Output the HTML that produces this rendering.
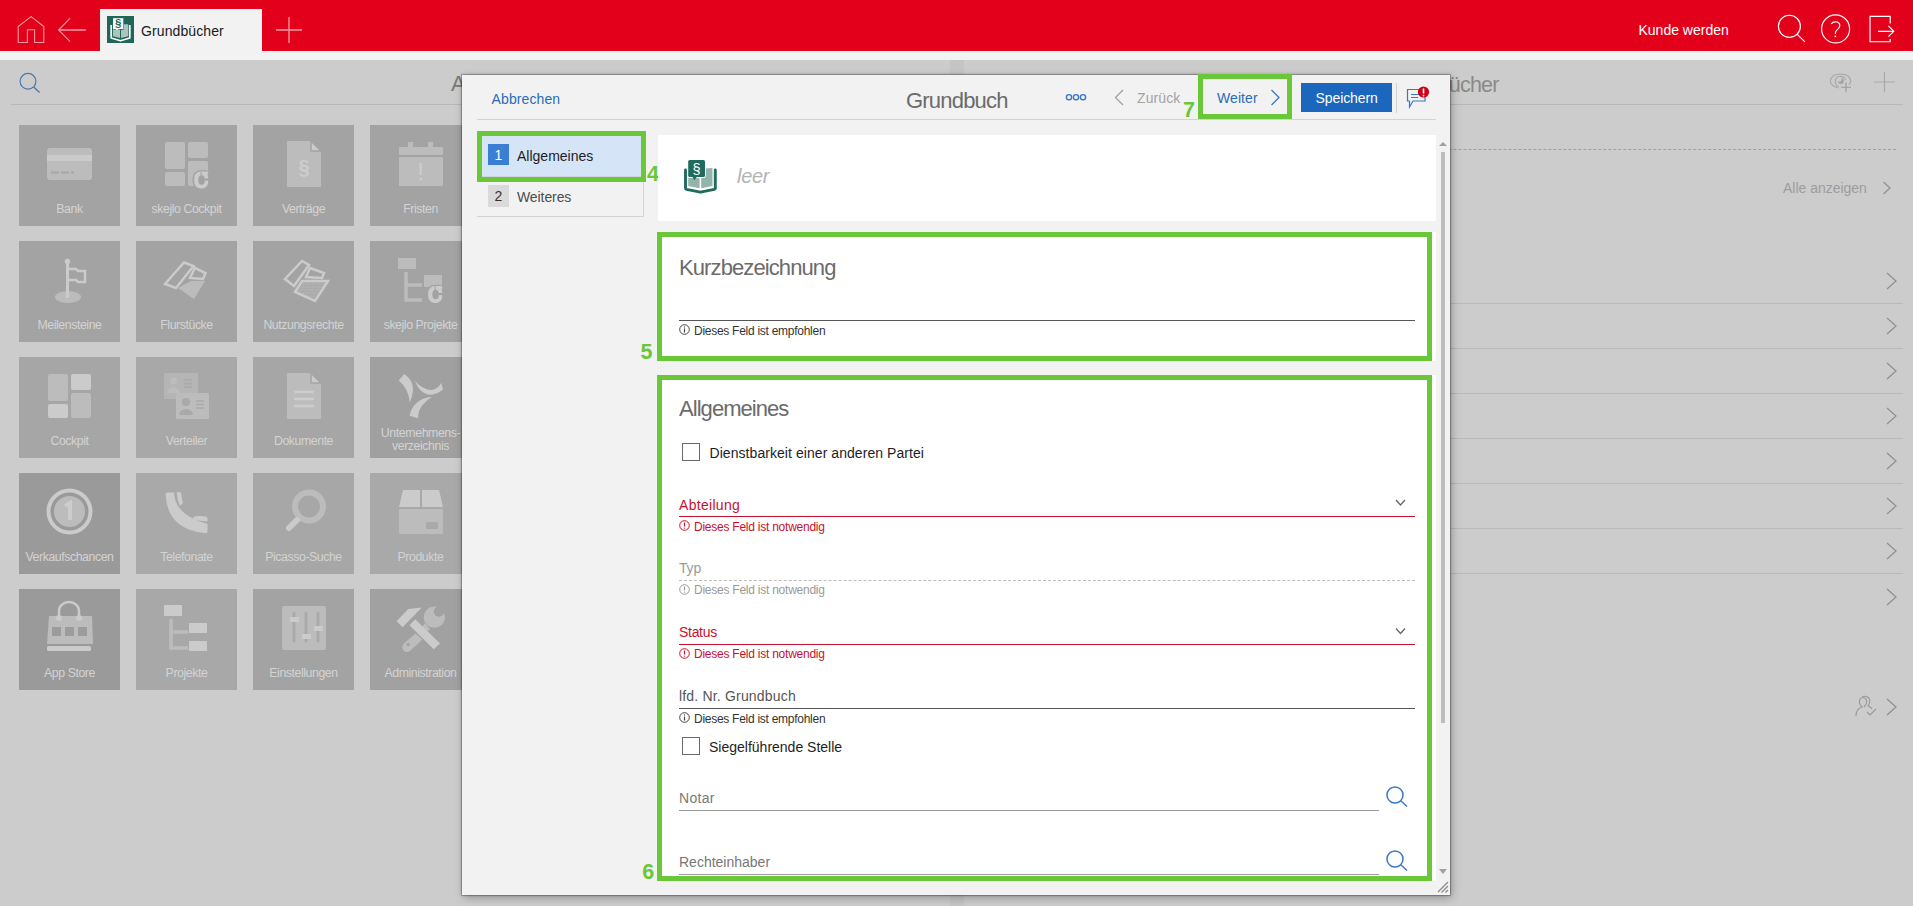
<!DOCTYPE html>
<html><head><meta charset="utf-8">
<style>
*{margin:0;padding:0;box-sizing:border-box}
html,body{width:1913px;height:906px;overflow:hidden;background:#cccccc;font-family:"Liberation Sans",sans-serif;position:relative}
.a{position:absolute}
.t{position:absolute;white-space:nowrap;line-height:1;font-family:"Liberation Sans",sans-serif}
.s14{font-size:14px}
.s12{font-size:12px}
.tile{position:absolute;width:101px;height:101px;background:#a3a3a3}
.tile.d{background:#9b9b9b}
.tile .lb{position:absolute;left:-10px;right:-10px;top:77.9px;text-align:center;font-size:12.3px;color:#d3d3d3;letter-spacing:-0.42px;line-height:1;white-space:nowrap}
.tile svg{position:absolute;left:0;top:0}
.hl{position:absolute;height:1px}
.g5{position:absolute;border:5px solid #6ac737}
.gn{position:absolute;color:#6ac737;font-weight:bold;font-size:21.5px;line-height:1}
.chev{position:absolute}
</style></head><body>

<!-- HEADER -->
<div class="a" style="left:0;top:0;width:1913px;height:51px;background:#e2001a"></div>
<div class="a" style="left:0;top:51px;width:1913px;height:9px;background:#f2f2f2"></div>
<div class="a" style="left:100px;top:9px;width:162px;height:42px;background:#f2f2f2"></div>
<svg class="a" style="left:0;top:0" width="320" height="51" viewBox="0 0 320 51">
 <g fill="none" stroke="#f49aa4" stroke-width="1.3">
  <path d="M18.2 42.5 V26.5 L31.1 16.6 L43.8 26.5 V42.5 H34.6 V29.8 H27.4 V42.5 Z" stroke-width="1.1"/>
  <path d="M70.2 18.2 L58.6 30 L70.2 41.6" stroke-width="1.1"/>
  <path d="M59 30 H85.8" stroke-width="1.5"/>
  <path d="M289 17 V43 M276 30 H302"/>
 </g>
</svg>
<svg class="a" style="left:107px;top:16px" width="27" height="27" viewBox="0 0 27 27">
 <rect x="0" y="0" width="27" height="27" fill="#1f6558"/>
 <path d="M4.2 9 V22 L13.5 24.8 L22.8 22 V9" fill="none" stroke="#fff" stroke-width="1.7" stroke-linejoin="round"/>
 <path d="M6 13.5 H13 V22 L6 20.3 Z" fill="#a9c5be"/>
 <path d="M14 14 L16.8 13.4 V8.3 H20.3 Q21.3 8.3 21.3 9.3 V20.3 L14 22 Z" fill="#a9c5be"/>
 <rect x="6" y="2.2" width="10.3" height="10.8" fill="#fff"/>
 <path d="M8.5 12.5 L10 14.5 L11.5 12.5 Z" fill="#fff"/>
 <text x="11.2" y="11" font-family="Liberation Sans" font-size="11.5" font-weight="bold" fill="#1f6558" text-anchor="middle">§</text>
</svg>
<div class="t s14" style="left:141px;top:24.2px;color:#1a1a1a;letter-spacing:0.1px">Grundbücher</div>

<div class="t s14" style="left:1638.5px;top:23.2px;color:#fff">Kunde werden</div>
<svg class="a" style="left:1760px;top:0" width="153" height="51" viewBox="1760 0 153 51">
 <g fill="none" stroke="#fff" stroke-width="1.15">
  <circle cx="1789.4" cy="26.3" r="11"/>
  <path d="M1797 34.2 L1804.9 41.8"/>
  <circle cx="1835.6" cy="28.9" r="14"/>
  <path d="M1831.2 24 Q1832.5 21.8 1835.5 21.8 Q1839.8 22 1839.8 25.6 Q1839.6 28.2 1836.6 30.4 Q1835.4 31.4 1835.4 33.3 V34"/>
  <path d="M1890.2 23.4 V16.4 H1870 V41.7 H1890.2 V39.1"/>
  <path d="M1878.1 31.3 H1893.6 M1888.4 25.9 L1893.8 31.3 L1888.4 36.6"/>
 </g>
 <circle cx="1835.4" cy="36.3" r="0.9" fill="#fff"/>
</svg>

<!-- LEFT PANEL -->
<svg class="a" style="left:18px;top:70px" width="26" height="26" viewBox="18 70 26 26">
 <circle cx="28" cy="81.3" r="7.9" fill="none" stroke="#4a78b0" stroke-width="1.2"/>
 <path d="M33.7 87 L39.6 92.6" stroke="#4a78b0" stroke-width="1.4"/>
</svg>
<div class="t" style="left:451px;top:73.3px;font-size:22px;color:#7a7a7a">Apps</div>
<!--TILES-->
<div class="tile" style="left:19px;top:125px;background:#a3a3a3"><svg width="101" height="101" viewBox="0 0 101 101"><rect x="28" y="23" width="45" height="32" rx="3" fill="#bcbcbc"/><rect x="28" y="30" width="45" height="6" fill="#cbcbcb"/><path d="M32 47.5h8M42 47.5h8M52 47.5h3" stroke="#a9a9a9" stroke-width="2.5"/></svg><div class="lb">Bank</div></div>
<div class="tile" style="left:136px;top:125px;background:#a3a3a3"><svg width="101" height="101" viewBox="0 0 101 101"><rect x="29" y="17" width="20" height="27" rx="2" fill="#bcbcbc"/><rect x="52" y="17" width="20" height="16" rx="2" fill="#bcbcbc"/><rect x="29" y="47" width="20" height="14" rx="2" fill="#bcbcbc"/><rect x="52" y="36" width="20" height="25" rx="2" fill="#bcbcbc"/><rect x="56.6" y="45.2" width="20" height="20" rx="8" fill="#a3a3a3"/><rect x="58.2" y="46.6" width="14.2" height="16.8" rx="6.5" fill="#cbcbcb"/><rect x="64.5" y="46.6" width="8" height="3" fill="#cbcbcb"/><ellipse cx="65.6" cy="55" rx="3.3" ry="4.7" fill="#a3a3a3"/><rect x="68.8" y="53.5" width="4" height="2.1" fill="#a3a3a3"/><rect x="64.6" y="46.6" width="1.1" height="4" fill="#a3a3a3"/><rect x="72.4" y="45" width="4" height="20" fill="#a3a3a3"/></svg><div class="lb">skejlo Cockpit</div></div>
<div class="tile" style="left:253px;top:125px;background:#a3a3a3"><svg width="101" height="101" viewBox="0 0 101 101"><path d="M34 16h24l10 10v36H34z" fill="#bcbcbc"/><path d="M58 16v10h10z" fill="#cbcbcb" stroke="#a3a3a3" stroke-width="1.5"/><text x="51" y="49" font-family="Liberation Sans" font-size="20" font-weight="bold" fill="#cdcdcd" text-anchor="middle">§</text></svg><div class="lb">Verträge</div></div>
<div class="tile" style="left:370px;top:125px;background:#a3a3a3"><svg width="101" height="101" viewBox="0 0 101 101"><rect x="29" y="22" width="44" height="8" rx="1" fill="#bcbcbc"/><rect x="29" y="32" width="44" height="29" rx="1" fill="#bcbcbc"/><rect x="38" y="17" width="5" height="8" fill="#bcbcbc"/><rect x="58" y="17" width="5" height="8" fill="#bcbcbc"/><rect x="49.5" y="38" width="2.5" height="12" fill="#cbcbcb"/><circle cx="50.7" cy="54" r="1.6" fill="#cbcbcb"/></svg><div class="lb">Fristen</div></div>
<div class="tile" style="left:19px;top:241px;background:#a3a3a3"><svg width="101" height="101" viewBox="0 0 101 101"><ellipse cx="49" cy="56" rx="13" ry="6" fill="#bcbcbc"/><rect x="47" y="21" width="3" height="36" fill="#cbcbcb"/><circle cx="48.5" cy="20.5" r="2.7" fill="#cbcbcb"/><path d="M50 28h7l2 2h7v11h-7l-2-2h-7" fill="none" stroke="#cbcbcb" stroke-width="2.5"/></svg><div class="lb">Meilensteine</div></div>
<div class="tile" style="left:136px;top:241px;background:#a3a3a3"><svg width="101" height="101" viewBox="0 0 101 101"><path d="M29 43L48 21.5L57.5 25L40 47z" fill="none" stroke="#cbcbcb" stroke-width="2.5"/><path d="M59 27L69.5 32L67 38L54 37z" fill="none" stroke="#cbcbcb" stroke-width="2.5"/><path d="M55 40H69L58 58L42 47z" fill="#bcbcbc"/></svg><div class="lb">Flurstücke</div></div>
<div class="tile" style="left:253px;top:241px;background:#a3a3a3"><svg width="101" height="101" viewBox="0 0 101 101"><path d="M32 38L49 20L56 24L41 45z" fill="none" stroke="#cbcbcb" stroke-width="2.5"/><path d="M57 27L71 32L69 37L53 36z" fill="none" stroke="#cbcbcb" stroke-width="2.5"/><path d="M49 40H75L62 60L42 51z" fill="#ababab" stroke="#cbcbcb" stroke-width="2.5"/><path d="M50 43H71M48 46H69M46 49H67M50 52H65M54 55H63" stroke="#bdbdbd" stroke-width="1" stroke-dasharray="1 1.2"/></svg><div class="lb">Nutzungsrechte</div></div>
<div class="tile" style="left:370px;top:241px;background:#a3a3a3"><svg width="101" height="101" viewBox="0 0 101 101"><rect x="28" y="17" width="18" height="11" fill="#bcbcbc"/><path d="M36 31V59H52M36 44H52" fill="none" stroke="#bcbcbc" stroke-width="3.5"/><rect x="54" y="34" width="18" height="12" fill="#bcbcbc"/><rect x="56.6" y="43.7" width="20" height="20" rx="8" fill="#a3a3a3"/><rect x="58.2" y="45.1" width="14.2" height="16.8" rx="6.5" fill="#cbcbcb"/><rect x="64.5" y="45.1" width="8" height="3" fill="#cbcbcb"/><ellipse cx="65.6" cy="53.5" rx="3.3" ry="4.7" fill="#a3a3a3"/><rect x="68.8" y="52.0" width="4" height="2.1" fill="#a3a3a3"/><rect x="64.6" y="45.1" width="1.1" height="4" fill="#a3a3a3"/><rect x="72.4" y="43.5" width="4" height="20" fill="#a3a3a3"/></svg><div class="lb">skejlo Projekte</div></div>
<div class="tile" style="left:19px;top:357px;background:#a6a6a6"><svg width="101" height="101" viewBox="0 0 101 101"><rect x="29" y="17" width="20" height="27" rx="2" fill="#bcbcbc"/><rect x="52" y="17" width="20" height="16" rx="2" fill="#cbcbcb"/><rect x="29" y="47" width="20" height="14" rx="2" fill="#cbcbcb"/><rect x="52" y="36" width="20" height="25" rx="2" fill="#bcbcbc"/></svg><div class="lb">Cockpit</div></div>
<div class="tile" style="left:136px;top:357px;background:#a8a8a8"><svg width="101" height="101" viewBox="0 0 101 101"><rect x="28" y="16" width="34" height="26" rx="1" fill="#b5b5b5"/><circle cx="37.5" cy="24" r="3.5" fill="#bdbdbd"/><path d="M31 36a6.5 5.5 0 0 1 13 0z" fill="#bdbdbd"/><path d="M48 23h8M48 26.5h8M48 30h8" stroke="#a9a9a9" stroke-width="1.5"/><rect x="40" y="36" width="33" height="26" rx="1.5" fill="#bcbcbc"/><circle cx="50" cy="45" r="4" fill="#a9a9a9"/><path d="M43 58a7 6 0 0 1 14 0z" fill="#a9a9a9"/><path d="M60 44h8M60 47.5h8M60 51h8" stroke="#a9a9a9" stroke-width="1.6"/></svg><div class="lb">Verteiler</div></div>
<div class="tile" style="left:253px;top:357px;background:#a6a6a6"><svg width="101" height="101" viewBox="0 0 101 101"><path d="M34 16h24l10 10v36H34z" fill="#bcbcbc"/><path d="M58 16v10h10z" fill="#cbcbcb" stroke="#a5a5a5" stroke-width="1.5"/><path d="M41 35h20M41 42h20M41 49h20" stroke="#cdcdcd" stroke-width="2.5"/></svg><div class="lb">Dokumente</div></div>
<div class="tile" style="left:370px;top:357px;background:#a0a0a0"><svg width="101" height="101" viewBox="0 0 101 101"><path d="M28.7 23.5L34.2 16.9Q43.5 23 43 33Q42.5 40 39.6 45.4Q39 32 28.7 23.5z" fill="#cbcbcb"/><path d="M45.1 24.1Q52 32.5 61 33Q67 33.2 71.2 26L73 32.6Q66 38.5 58 37.5Q49 35.5 45.1 24.1z" fill="#cbcbcb"/><path d="M62.1 39.9Q52 40 45.5 47Q40.5 52.5 39.6 58.7L48.1 61.2Q48 53 53 47.5Q57 42.5 62.1 39.9z" fill="#cbcbcb"/></svg><div class="lb" style="top:70.4px">Unternehmens-</div><div class="lb" style="top:83.1px">verzeichnis</div></div>
<div class="tile" style="left:19px;top:473px;background:#9a9a9a"><svg width="101" height="101" viewBox="0 0 101 101"><circle cx="50.5" cy="38.5" r="21" fill="none" stroke="#cbcbcb" stroke-width="4"/><circle cx="50.5" cy="38.5" r="15.5" fill="#bcbcbc"/><path d="M46 33l5-3v17" fill="none" stroke="#cdcdcd" stroke-width="4"/></svg><div class="lb">Verkaufschancen</div></div>
<div class="tile" style="left:136px;top:473px;background:#a9a9a9"><svg width="101" height="101" viewBox="0 0 101 101"><path d="M29.6 21Q29.6 19.4 31.5 19.4H38.1Q38.5 42 71.5 51V58.5Q71.5 60.5 68.4 60.1Q31 56 29.6 21z" fill="#cbcbcb"/><path d="M40.6 19.2H45Q45.8 26 47 30L43.8 33Q41 26 40.6 19.2z" fill="#cbcbcb"/><path d="M57.5 44Q60 42.5 70 43.5Q71.5 44 71.5 45.5V48.6L57.5 47z" fill="#cbcbcb"/></svg><div class="lb">Telefonate</div></div>
<div class="tile" style="left:253px;top:473px;background:#a7a7a7"><svg width="101" height="101" viewBox="0 0 101 101"><circle cx="56" cy="33.5" r="14" fill="none" stroke="#bcbcbc" stroke-width="6"/><path d="M44 47L36 55" stroke="#cbcbcb" stroke-width="6" stroke-linecap="round"/></svg><div class="lb">Picasso-Suche</div></div>
<div class="tile" style="left:370px;top:473px;background:#a9a9a9"><svg width="101" height="101" viewBox="0 0 101 101"><path d="M33 17H50V34H29z" fill="#cbcbcb"/><path d="M52 17H69L73 34H52z" fill="#cbcbcb"/><rect x="29" y="36" width="44" height="25" rx="1" fill="#bcbcbc"/><rect x="56" y="49" width="12" height="7" fill="#aaaaaa"/></svg><div class="lb">Produkte</div></div>
<div class="tile" style="left:19px;top:589px;background:#9a9a9a"><svg width="101" height="101" viewBox="0 0 101 101"><path d="M30 27H73L74 55H28z" fill="#bcbcbc"/><path d="M40 28V22a10 9 0 0 1 20 0v6" fill="none" stroke="#cbcbcb" stroke-width="2.5"/><circle cx="40" cy="29" r="3" fill="#cbcbcb"/><circle cx="60" cy="29" r="3" fill="#cbcbcb"/><rect x="28" y="57" width="44" height="5" rx="1.5" fill="#cbcbcb"/><rect x="33" y="38" width="9" height="9" fill="#9c9c9c"/><rect x="46" y="38" width="9" height="9" fill="#9c9c9c"/><rect x="59" y="38" width="9" height="9" fill="#9c9c9c"/></svg><div class="lb">App Store</div></div>
<div class="tile" style="left:136px;top:589px;background:#a8a8a8"><svg width="101" height="101" viewBox="0 0 101 101"><rect x="28" y="16" width="18" height="11" fill="#cbcbcb"/><path d="M35 30V59H52M35 43H52" fill="none" stroke="#bcbcbc" stroke-width="3.5"/><rect x="53" y="34" width="18" height="10" fill="#cbcbcb"/><rect x="53" y="52" width="18" height="10" fill="#cbcbcb"/></svg><div class="lb">Projekte</div></div>
<div class="tile" style="left:253px;top:589px;background:#a3a3a3"><svg width="101" height="101" viewBox="0 0 101 101"><rect x="29" y="17" width="44" height="44" rx="2" fill="#bcbcbc"/><path d="M41 24V52M53 24V52M65 24V52" stroke="#a9a9a9" stroke-width="3" stroke-linecap="round"/><rect x="37" y="28" width="9" height="5" fill="#cbcbcb"/><rect x="49" y="45" width="9" height="5" fill="#cbcbcb"/><rect x="61" y="37" width="9" height="5" fill="#cbcbcb"/></svg><div class="lb">Einstellungen</div></div>
<div class="tile" style="left:370px;top:589px;background:#a1a1a1"><svg width="101" height="101" viewBox="0 0 101 101"><circle cx="64.4" cy="28.2" r="10.6" fill="#bcbcbc"/><circle cx="68.8" cy="22.8" r="5" fill="#a1a1a1"/><path d="M66 19L72 12.5L80 20L73 25.5z" fill="#a1a1a1"/><path d="M55 34L60 40L56 44L52 38z" fill="#bcbcbc"/><path d="M26.6 32.2L38.2 19.9L51.8 18.6L32.6 38.2z" fill="#cbcbcb"/><path d="M39.5 36.2L45.2 30.2L70 54.4L63.7 60.3z" fill="#cbcbcb"/><path d="M45.5 44.5L52.5 50.5L40 62Q35.5 64.5 33 61Q31 57.5 34 54.5z" fill="#bcbcbc"/><circle cx="38.2" cy="55.6" r="1.7" fill="#a1a1a1"/></svg><div class="lb">Administration</div></div>

<!--/TILES-->
<div class="hl" style="left:11px;top:104px;width:940px;background:#b8b8b8"></div>

<!-- RIGHT PANEL -->
<div class="t" style="left:1298.6px;width:200px;text-align:right;top:75.4px;font-size:21.5px;color:#8a8a8a;letter-spacing:-0.8px">Grundbücher</div>
<svg class="a" style="left:1820px;top:65px" width="93" height="35" viewBox="1820 65 93 35">
 <g fill="none" stroke="#a9a9a9" stroke-width="1.2">
  <path d="M1838.5 88 Q1830.5 85.5 1830.3 81.2 Q1831 74.2 1840.5 74 Q1850 74.2 1850.8 81.2 Q1850.8 83 1848.8 84.8"/>
  <path d="M1845.4 80.3 Q1845 76.3 1840.2 76.3 Q1835.3 76.7 1835.2 81.5 Q1835.5 85.3 1838.8 86.8"/>
  <path d="M1884.5 72 V92 M1874 82 H1895"/>
 </g>
 <path d="M1846 82.4 V92.2 M1841.1 87.4 H1850.9" stroke="#a3a3a3" stroke-width="1.3"/>
 <circle cx="1840.8" cy="81" r="3" fill="#a3a3a3"/>
 <circle cx="1839.3" cy="79.3" r="2.4" fill="#cccccc"/>
</svg>
<div class="hl" style="left:964px;top:149px;width:932px;border-top:1px dashed #a0a0a0;height:0"></div>
<div class="t s14" style="left:1783px;top:180.6px;color:#9d9d9d;letter-spacing:-0.02px">Alle anzeigen</div>
<svg class="a" style="left:1870px;top:170px" width="43" height="460" viewBox="1870 170 43 460">
 <g fill="none" stroke="#8f8f8f" stroke-width="1.2">
  <path d="M1883.5 182 L1890 188 L1883.5 194"/>
  <path d="M1887 273 L1896 281 L1887 289"/>
  <path d="M1887 318 L1896 326 L1887 334"/>
  <path d="M1887 363 L1896 371 L1887 379"/>
  <path d="M1887 408 L1896 416 L1887 424"/>
  <path d="M1887 453 L1896 461 L1887 469"/>
  <path d="M1887 498 L1896 506 L1887 514"/>
  <path d="M1887 543 L1896 551 L1887 559"/>
  <path d="M1887 589 L1896 597 L1887 605"/>
 </g>
</svg>
<div class="hl" style="left:964px;top:303px;width:939px;background:#b9b9b9"></div>
<div class="hl" style="left:964px;top:348px;width:939px;background:#b9b9b9"></div>
<div class="hl" style="left:964px;top:393px;width:939px;background:#b9b9b9"></div>
<div class="hl" style="left:964px;top:438px;width:939px;background:#b9b9b9"></div>
<div class="hl" style="left:964px;top:483px;width:939px;background:#b9b9b9"></div>
<div class="hl" style="left:964px;top:528px;width:939px;background:#b9b9b9"></div>
<div class="hl" style="left:964px;top:573px;width:939px;background:#b9b9b9"></div>
<svg class="a" style="left:1850px;top:690px" width="63" height="32" viewBox="1850 690 63 32">
 <g fill="none" stroke="#999" stroke-width="1.1">
  <path d="M1856 716 Q1856 709 1862 707 Q1858 703 1860 699 Q1863 696 1866 699 Q1868 703 1864 707"/>
  <path d="M1862 697 Q1866 695 1869 698 Q1871 702 1868 706 Q1871 707 1872 709"/>
  <path d="M1867 712 L1870 715 L1876 709"/>
 </g>
 <path d="M1887 699 L1896 707 L1887 715" fill="none" stroke="#8f8f8f" stroke-width="1.2"/>
</svg>
<div class="a" style="left:950px;top:60px;width:14px;height:846px;background:#c5c5c5"></div>
<div class="hl" style="left:964px;top:104px;width:939px;background:#b8b8b8"></div>

<!-- MODAL -->
<div class="a" style="left:462px;top:75px;width:988px;height:820px;background:#f2f2f2;box-shadow:0 0 0 1px rgba(0,0,0,0.18),0 0 3px rgba(0,0,0,0.35),2px 3px 9px rgba(0,0,0,0.25)"></div>

<!-- modal header -->
<div class="t s14" style="left:491.6px;top:91.9px;color:#2b6cb8;letter-spacing:0.1px">Abbrechen</div>
<div class="hl" style="left:477px;top:119px;width:959px;background:#d3d3d3"></div>
<div class="t" style="left:906px;top:90.4px;font-size:22px;color:#6b6b6b;letter-spacing:-0.8px">Grundbuch</div>
<svg class="a" style="left:1060px;top:80px" width="240" height="40" viewBox="1060 80 240 40">
 <g fill="none" stroke="#3a78c4" stroke-width="1.4">
  <circle cx="1069" cy="97.2" r="2.6"/><circle cx="1076" cy="97.2" r="2.6"/><circle cx="1083" cy="97.2" r="2.6"/>
 </g>
 <path d="M1123 90 L1115.5 97.5 L1123 105" fill="none" stroke="#a0a0a0" stroke-width="1.3"/>
 <path d="M1271.5 90 L1279 97.5 L1271.5 105" fill="none" stroke="#3a78c4" stroke-width="1.3"/>
</svg>
<div class="t s14" style="left:1137px;top:91.2px;color:#a3a3a3;letter-spacing:0.1px">Zurück</div>
<div class="t s14" style="left:1217px;top:91.2px;color:#2b6cb8;letter-spacing:0.08px">Weiter</div>
<div class="g5" style="left:1198px;top:74px;width:94px;height:45px"></div>
<div class="gn" style="left:1183px;top:99.9px">7</div>
<div class="a" style="left:1301px;top:83px;width:91px;height:29px;background:#1b67be"></div>
<div class="t s14" style="left:1315.5px;top:91px;color:#fff;letter-spacing:-0.08px">Speichern</div>
<div class="a" style="left:1396px;top:83px;width:1px;height:30px;background:#d0d0d0"></div>
<svg class="a" style="left:1400px;top:84px" width="32" height="28" viewBox="1400 84 32 28">
 <path d="M1407.5 89.5 H1425 V101 H1413 L1409.5 107 V101 H1407.5 Z" fill="none" stroke="#3a78c4" stroke-width="1.2"/>
 <path d="M1411 94.5 H1420 M1411 97.5 H1418" stroke="#3a78c4" stroke-width="1.2"/>
 <circle cx="1423.5" cy="92" r="5.6" fill="#d0021b"/>
 <path d="M1423.5 88.5 V93.5" stroke="#fff" stroke-width="1.6"/><circle cx="1423.5" cy="95.6" r="0.9" fill="#fff"/>
</svg>

<!-- nav -->
<div class="a" style="left:477px;top:131px;width:166px;height:51px;background:#d5e4f6"></div>
<div class="a" style="left:643px;top:182px;width:1px;height:34px;background:#d3d3d3"></div>
<div class="hl" style="left:477px;top:216px;width:167px;background:#d3d3d3"></div>
<div class="a" style="left:488px;top:144px;width:21px;height:21px;background:#3b7fd4"></div>
<div class="t s14" style="left:488px;top:148px;width:21px;text-align:center;color:#fff">1</div>
<div class="t s14" style="left:517px;top:149.3px;color:#1e1e1e">Allgemeines</div>
<div class="hl" style="left:482px;top:176px;width:159px;background:#cfd6de"></div>
<div class="a" style="left:488px;top:185px;width:21px;height:22px;background:#dadada"></div>
<div class="t s14" style="left:488px;top:189px;width:21px;text-align:center;color:#333">2</div>
<div class="t s14" style="left:517px;top:190.2px;color:#4d4d4d;letter-spacing:-0.09px">Weiteres</div>
<div class="g5" style="left:477px;top:131px;width:169px;height:51px"></div>
<div class="gn" style="left:647px;top:163.5px">4</div>

<!-- card 1 -->
<div class="a" style="left:658px;top:135px;width:778px;height:86px;background:#fff"></div>
<svg class="a" style="left:684px;top:160px" width="34" height="35" viewBox="0 0 34 35">
 <path d="M1.5 10 V28.3 Q1.5 29.1 2.5 29.4 L16.4 32.2 L30.3 29.4 Q31.3 29.1 31.3 28.3 V10" fill="none" stroke="#1f6b5e" stroke-width="2.9" stroke-linejoin="round" stroke-linecap="round"/>
 <path d="M4.2 17.6 L15.6 18.3 V28.2 L4.2 26 Z" fill="#94b3ab"/>
 <path d="M17.2 18.3 L20 17 L21 8.5 L28.5 8 V26 L17.2 28.2 Z" fill="#94b3ab"/>
 <rect x="3.3" y="-0.8" width="18.6" height="18.8" rx="2.2" fill="#fff"/>
 <rect x="4.2" y="0" width="16.8" height="17" rx="1.6" fill="#1f6b5e"/>
 <path d="M8 16 L10.3 20.2 L13.5 16 Z" fill="#1f6b5e"/>
 <text x="12.6" y="13.8" font-family="Liberation Sans" font-size="14.5" fill="#fff" text-anchor="middle">§</text>
</svg>
<div class="t" style="left:737px;top:166px;font-size:20px;font-style:italic;color:#b3b3b3;letter-spacing:-0.3px">leer</div>

<!-- card 2 -->
<div class="a" style="left:658px;top:232px;width:778px;height:129px;background:#fff"></div>
<div class="t" style="left:679px;top:257.4px;font-size:22px;color:#6b6b6b;letter-spacing:-0.9px">Kurzbezeichnung</div>
<div class="hl" style="left:679px;top:320px;width:736px;background:#555"></div>
<svg class="a" style="left:679px;top:324px" width="11" height="11" viewBox="0 0 11 11"><circle cx="5.5" cy="5.5" r="4.8" fill="none" stroke="#444" stroke-width="1"/><path d="M5.5 4.5V8.5" stroke="#444" stroke-width="1.2"/><circle cx="5.5" cy="2.9" r="0.7" fill="#444"/></svg>
<div class="t s12" style="left:694px;top:324.5px;color:#333;letter-spacing:-0.27px">Dieses Feld ist empfohlen</div>
<div class="g5" style="left:657px;top:232px;width:775px;height:129px"></div>
<div class="gn" style="left:640.5px;top:341.6px">5</div>

<!-- card 3 -->
<div class="a" style="left:658px;top:375px;width:778px;height:506px;background:#fff"></div>
<div class="t" style="left:679px;top:397.9px;font-size:22px;color:#6b6b6b;letter-spacing:-0.95px">Allgemeines</div>
<div class="a" style="left:682px;top:443px;width:18px;height:18px;border:1px solid #6a6a6a"></div>
<div class="t s14" style="left:709.5px;top:446.2px;color:#1e1e1e;letter-spacing:0.06px">Dienstbarkeit einer anderen Partei</div>

<div class="t s14" style="left:679px;top:497.5px;color:#c8102e;letter-spacing:0.3px">Abteilung</div>
<div class="hl" style="left:679px;top:516px;width:736px;background:#c8102e"></div>
<svg class="a" style="left:679px;top:520px" width="11" height="11" viewBox="0 0 11 11"><circle cx="5.5" cy="5.5" r="4.8" fill="none" stroke="#c8102e" stroke-width="1"/><path d="M5.5 2.5V6.5" stroke="#c8102e" stroke-width="1.2"/><circle cx="5.5" cy="8.1" r="0.7" fill="#c8102e"/></svg>
<div class="t s12" style="left:694px;top:520.8px;color:#c8102e;letter-spacing:-0.24px">Dieses Feld ist notwendig</div>

<div class="t s14" style="left:679px;top:561.2px;color:#999;letter-spacing:-0.19px">Typ</div>
<div class="hl" style="left:679px;top:580px;width:736px;border-top:1px dashed #bdbdbd"></div>
<svg class="a" style="left:679px;top:584px" width="11" height="11" viewBox="0 0 11 11"><circle cx="5.5" cy="5.5" r="4.8" fill="none" stroke="#999" stroke-width="1"/><path d="M5.5 2.5V6.5" stroke="#999" stroke-width="1.2"/><circle cx="5.5" cy="8.1" r="0.7" fill="#999"/></svg>
<div class="t s12" style="left:694px;top:584.3px;color:#9a9a9a;letter-spacing:-0.24px">Dieses Feld ist notwendig</div>

<div class="t s14" style="left:679px;top:625.2px;color:#c8102e;letter-spacing:-0.3px">Status</div>
<div class="hl" style="left:679px;top:644px;width:736px;background:#c8102e"></div>
<svg class="a" style="left:679px;top:648px" width="11" height="11" viewBox="0 0 11 11"><circle cx="5.5" cy="5.5" r="4.8" fill="none" stroke="#c8102e" stroke-width="1"/><path d="M5.5 2.5V6.5" stroke="#c8102e" stroke-width="1.2"/><circle cx="5.5" cy="8.1" r="0.7" fill="#c8102e"/></svg>
<div class="t s12" style="left:694px;top:648.4px;color:#c8102e;letter-spacing:-0.24px">Dieses Feld ist notwendig</div>
<svg class="a" style="left:1390px;top:495px" width="20" height="145" viewBox="1390 495 20 145">
 <path d="M1396 500 L1400.5 505 L1405 500" fill="none" stroke="#666" stroke-width="1.3"/>
 <path d="M1396 628.5 L1400.5 633.5 L1405 628.5" fill="none" stroke="#666" stroke-width="1.3"/>
</svg>

<div class="t s14" style="left:679px;top:689.2px;color:#555;letter-spacing:0.18px">lfd. Nr. Grundbuch</div>
<div class="hl" style="left:679px;top:708px;width:736px;background:#555"></div>
<svg class="a" style="left:679px;top:712px" width="11" height="11" viewBox="0 0 11 11"><circle cx="5.5" cy="5.5" r="4.8" fill="none" stroke="#444" stroke-width="1"/><path d="M5.5 4.5V8.5" stroke="#444" stroke-width="1.2"/><circle cx="5.5" cy="2.9" r="0.7" fill="#444"/></svg>
<div class="t s12" style="left:694px;top:712.5px;color:#333;letter-spacing:-0.27px">Dieses Feld ist empfohlen</div>

<div class="a" style="left:682px;top:737px;width:18px;height:18px;border:1px solid #6a6a6a"></div>
<div class="t s14" style="left:709px;top:740.2px;color:#1e1e1e">Siegelführende Stelle</div>

<div class="t s14" style="left:679px;top:791.2px;color:#777;letter-spacing:0.3px">Notar</div>
<div class="hl" style="left:679px;top:810px;width:700px;background:#9a9a9a"></div>
<div class="t s14" style="left:679px;top:854.5px;color:#777">Rechteinhaber</div>
<div class="hl" style="left:679px;top:874px;width:700px;background:#9a9a9a"></div>
<svg class="a" style="left:1380px;top:780px" width="40" height="100" viewBox="1380 780 40 100">
 <g fill="none" stroke="#3a78c4" stroke-width="1.5">
  <circle cx="1395" cy="795" r="8"/><path d="M1400.8 800.8 L1407 806.5"/>
  <circle cx="1395" cy="859" r="8"/><path d="M1400.8 864.8 L1407 870.5"/>
 </g>
</svg>
<div class="g5" style="left:657px;top:375px;width:775px;height:506px"></div>
<div class="gn" style="left:642.2px;top:862px">6</div>

<!-- scrollbar -->
<div class="a" style="left:1441px;top:152px;width:4px;height:571px;background:#bdbdbd"></div>
<svg class="a" style="left:1436px;top:138px" width="14" height="10" viewBox="0 0 14 10"><path d="M3 8 L7 4 L11 8 Z" fill="#a0a0a0"/></svg>
<svg class="a" style="left:1436px;top:866px" width="14" height="10" viewBox="0 0 14 10"><path d="M3 3 L7 8 L11 3 Z" fill="#a0a0a0"/></svg>
<svg class="a" style="left:1436px;top:880px" width="14" height="14" viewBox="0 0 14 14"><path d="M2 12 L12 2 M5.5 12.5 L12 6 M9.5 12.5 L12 10" stroke="#8a8a8a" stroke-width="1.3"/></svg>

</body></html>
